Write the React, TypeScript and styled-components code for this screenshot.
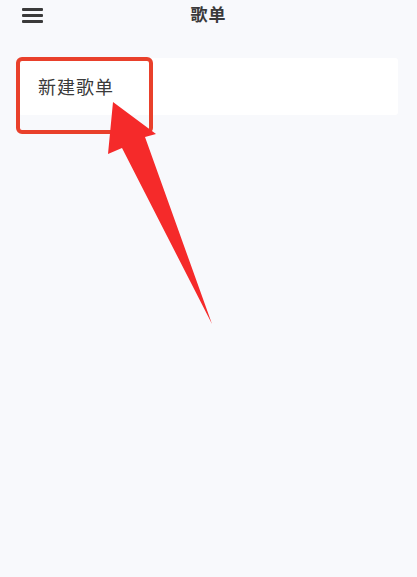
import styled, { createGlobalStyle } from "styled-components";

const GlobalStyle = createGlobalStyle`
    html, body {
        margin: 0;
        padding: 0;
        background: #f8f9fc;
    }
    body {
        font-family: "Noto Sans CJK SC", "Noto Sans", sans-serif;
    }
`;

const Page = styled.div`
    position: relative;
    width: 417px;
    height: 577px;
    background: #f8f9fc;
    overflow: hidden;
`;

const Header = styled.div`
    display: flex;
    align-items: center;
    justify-content: center;
    position: relative;
    height: 27px;
`;

const MenuButton = styled.div`
    position: absolute;
    left: 22px;
    top: 8px;
    display: flex;
    flex-direction: column;
    gap: 3.5px;
`;

const Bar = styled.span`
    display: block;
    width: 21px;
    height: 2.5px;
    background: #3a3a3a;
    border-radius: 1px;
`;

const Title = styled.h1`
    margin: 0;
    font-size: 17px;
    font-weight: 700;
    color: #3a3a3a;
    letter-spacing: 1px;
`;

const List = styled.div`
    display: flex;
    flex-direction: column;
    padding: 31px 19px 0 19px;
`;

const Card = styled.div`
    display: flex;
    align-items: center;
    height: 57px;
    padding: 0 19px;
    background: #ffffff;
    border-radius: 3px;
`;

const CardText = styled.span`
    font-size: 18px;
    font-weight: 400;
    color: #3a3a3a;
    letter-spacing: 1px;
    margin-top: -2px;
`;

const Highlight = styled.div`
    position: absolute;
    left: 16px;
    top: 57px;
    width: 129px;
    height: 69px;
    border: 4px solid #e9402b;
    border-radius: 6px;
    pointer-events: none;
`;

const Arrow = styled.svg`
    position: absolute;
    left: 0;
    top: 0;
    pointer-events: none;
`;

export default function App() {
    return (
        <>
            <GlobalStyle />
            <Page>
                <Header>
                    <MenuButton>
                        <Bar />
                        <Bar />
                        <Bar />
                    </MenuButton>
                    <Title>歌单</Title>
                </Header>
                <List>
                    <Card>
                        <CardText>新建歌单</CardText>
                    </Card>
                </List>
                <Highlight />
                <Arrow width="417" height="577" viewBox="0 0 417 577">
                    <polygon
                        points="113,102 156,134 145,137 212,324 122,148 108,154"
                        fill="#f52a2a"
                    />
                </Arrow>
            </Page>
        </>
    );
}
